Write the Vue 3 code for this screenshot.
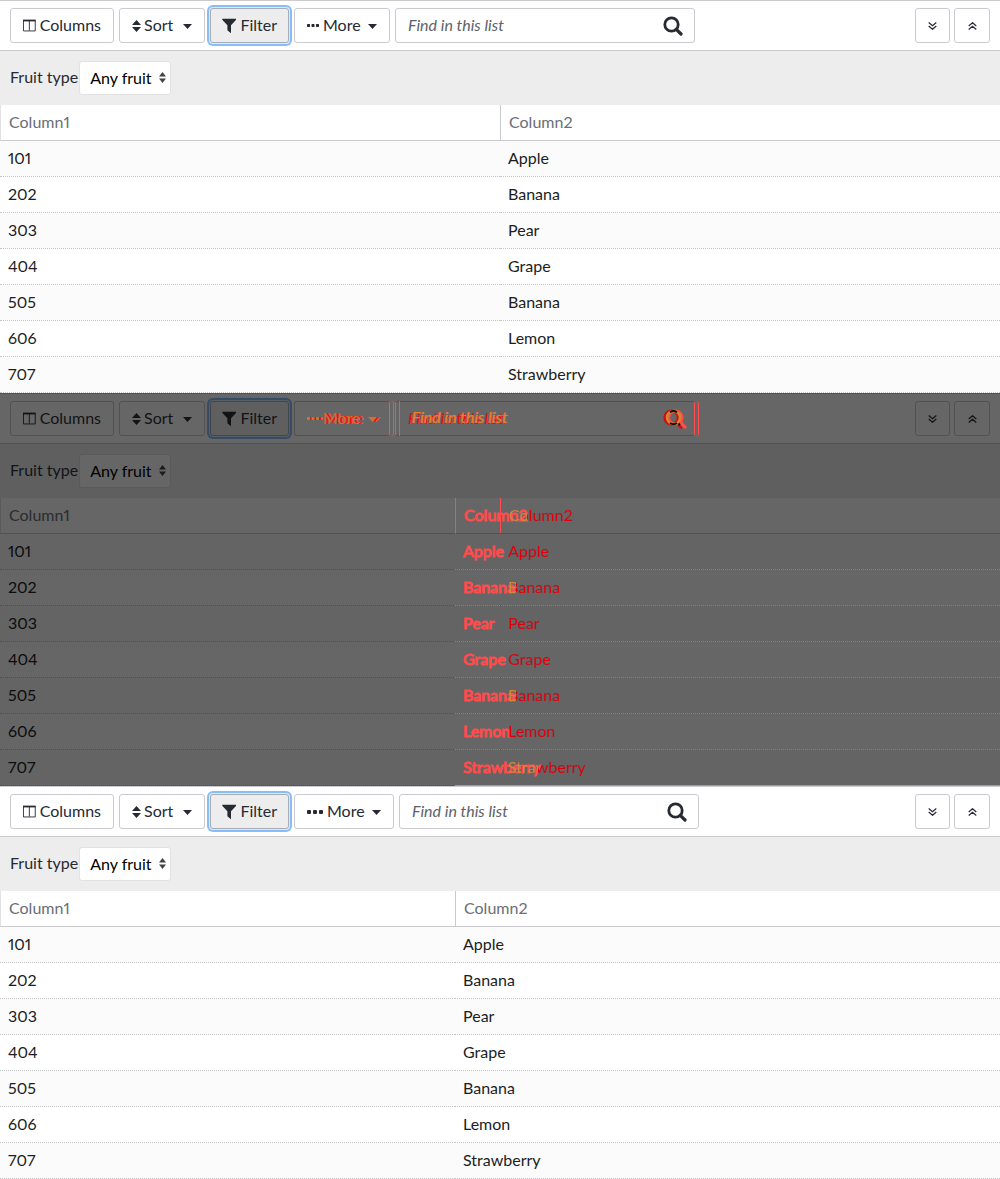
<script setup>
const rows = [
  { id: '101', fruit: 'Apple', mix: 0 },
  { id: '202', fruit: 'Banana', mix: 8 },
  { id: '303', fruit: 'Pear', mix: 0 },
  { id: '404', fruit: 'Grape', mix: 0 },
  { id: '505', fruit: 'Banana', mix: 8 },
  { id: '606', fruit: 'Lemon', mix: 0 },
  { id: '707', fruit: 'Strawberry', mix: 30 },
]
const panels = ['before', 'diff', 'after']
</script>

<template>
  <main class="page">
    <section v-for="p in panels" :key="p" class="panel" :class="p">
      <div class="toolbar">
        <button type="button" class="btn columns">
          <svg width="14" height="13" viewBox="0 0 14 13"><path d="M.5 1v11.500h13V1M7 1v11" fill="none" stroke="currentColor" /><path d="M0 0h14v2H0z" fill="currentColor" /></svg>
          <span>Columns</span>
        </button>
        <button type="button" class="btn sort">
          <svg width="9" height="12" viewBox="0 0 9 12"><path d="M4.500 0L9 5H0zM0 7h9l-4.500 5z" fill="currentColor" /></svg>
          <span>Sort</span>
          <svg class="caret" width="9" height="5" viewBox="0 0 9 5"><path d="M0 0h9L4.500 5z" fill="currentColor" /></svg>
        </button>
        <button type="button" class="btn filter" aria-pressed="true">
          <svg width="16" height="16" viewBox="0 0 16 16"><path d="M.4 0h15.200Q16 .6 15.500 1.200L10 7.200V16L6 12.800V7.200L.5 1.200Q0 .6.4 0z" fill="currentColor" /></svg>
          <span>Filter</span>
        </button>
        <button type="button" class="btn more">
          <svg v-if="p === 'after'" width="16" height="4" viewBox="0 0 16 4"><path d="M0 1q0-1 1-1h2q1 0 1 1v2q0 1-1 1H1q-1 0-1-1zM6 1q0-1 1-1h2q1 0 1 1v2q0 1-1 1H7q-1 0-1-1zM12 1q0-1 1-1h2q1 0 1 1v2q0 1-1 1h-2q-1 0-1-1z" fill="currentColor" /></svg>
          <svg v-else width="12" height="3" viewBox="0 0 12 3"><path d="M.5 0h2l.5.5v2l-.5.5h-2L0 2.500v-2zM5 0h2l.5.5v2L7 3H5l-.5-.5v-2zM9.500 0h2l.5.5v2l-.5.5h-2L9 2.500v-2z" fill="currentColor" /></svg>
          <span>More</span>
          <svg class="caret" width="9" height="5" viewBox="0 0 9 5"><path d="M0 0h9L4.500 5z" fill="currentColor" /></svg>
        </button>
        <div class="search">
          <input type="text" placeholder="Find in this list" aria-label="Find in this list" />
          <svg class="glass" width="20" height="20" viewBox="0 0 20 20"><circle cx="8.500" cy="8.500" r="6.700" fill="none" stroke="currentColor" stroke-width="2.800" /><path d="M13.300 13.300l4.700 4.700" stroke="currentColor" stroke-width="3.200" stroke-linecap="round" /></svg>
          <svg v-if="p === 'diff'" class="glass shifted" width="20" height="20" viewBox="0 0 20 20"><circle cx="8.500" cy="8.500" r="6.700" fill="none" stroke="currentColor" stroke-width="2.800" /><path d="M13.300 13.300l4.700 4.700" stroke="currentColor" stroke-width="3.200" stroke-linecap="round" /></svg>
          <svg v-if="p === 'diff'" class="glass overlap" width="20" height="20" viewBox="0 0 20 20"><circle cx="9.500" cy="8.500" r="6.500" fill="none" stroke="#d8852f" stroke-width="2.500" /><path d="M6 3.200q3.500-2.400 7 0M6 14q3.500 2.400 7 0M14.500 14.500l1.500 1.500" fill="none" stroke="#111" stroke-width="2" /></svg>
          <span v-if="p === 'diff'" class="find-ghost" aria-hidden="true">Find in this list</span>
        </div>
        <div class="actions">
          <button type="button" class="btn square" aria-label="Expand all">
            <svg width="9" height="8" viewBox="0 0 9 8"><path d="M.7.5l3.800 3.300L8.300.5M.7 4l3.800 3.300L8.300 4" fill="none" stroke="currentColor" stroke-width="1.200" /></svg>
          </button>
          <button type="button" class="btn square" aria-label="Collapse all">
            <svg width="9" height="8" viewBox="0 0 9 8"><path d="M.7 4l3.800-3.300L8.300 4M.7 7.500l3.800-3.300 3.800 3.300" fill="none" stroke="currentColor" stroke-width="1.200" /></svg>
          </button>
        </div>
      </div>

      <div class="filters">
        <label :for="'fruit-' + p">Fruit type</label>
        <div class="select">
          <select :id="'fruit-' + p"><option>Any fruit</option></select>
          <svg width="7" height="11" viewBox="0 0 7 11"><path d="M3.500 0L7 4.500H0zM0 6.500h7L3.500 11z" fill="currentColor" /></svg>
        </div>
      </div>

      <div class="grid">
        <table>
          <thead>
            <tr>
              <th class="first">Column1</th>
              <th><span class="value" :style="{ '--mix': '18px' }">Column2</span></th>
            </tr>
          </thead>
          <tbody>
            <tr v-for="r in rows" :key="r.id">
              <td>{{ r.id }}</td>
              <td><span class="value" :style="{ '--mix': r.mix + 'px' }">{{ r.fruit }}</span></td>
            </tr>
          </tbody>
        </table>
        <div v-if="p === 'diff'" class="ghost" aria-hidden="true">
          <div class="ghost-head">Column2</div>
          <div v-for="r in rows" :key="r.id" class="ghost-row">{{ r.fruit }}</div>
        </div>
      </div>
    </section>
  </main>
</template>

<style>
body {
  margin: 0;
}
</style>

<style scoped>
* {
  box-sizing: border-box;
}
.page {
  font: 16px/20px Lato, "Open Sans", sans-serif;
  font-variant-numeric: proportional-nums;
}
.panel {
  --bg: #fff;
  --stripe: #fbfbfb;
  --band: #ededed;
  --line: #cbcbcf;
  --soft: #e2e2e2;
  --dots: #c6c6c6;
  --text: #262a33;
  --strong: #1c1e22;
  --muted: #6a6e75;
  --ring: #86bdfc;
  --halo: #d8eafe;
  background: var(--bg);
  color: var(--text);
}
.diff {
  --bg: #666;
  --stripe: #646464;
  --band: #5f5f5f;
  --line: #515153;
  --soft: #5a5a5a;
  --dots: #4f4f4f;
  --text: #111317;
  --strong: #0b0c0e;
  --muted: #2a2c2f;
  --ring: #364c65;
  --halo: #565e66;
}
.toolbar {
  display: flex;
  align-items: center;
  gap: 5px;
  height: 51px;
  padding: 0 10px;
  border: solid var(--line);
  border-width: 1px 0;
}
.btn {
  display: flex;
  align-items: center;
  flex: none;
  height: 35px;
  margin: 0;
  padding: 0 12px;
  border: 1px solid var(--line);
  border-radius: 3px;
  background: var(--bg);
  color: var(--text);
  font: inherit;
}
.btn span {
  padding-bottom: 2px;
}
.columns {
  gap: 4px;
  width: 104px;
}
.sort {
  gap: 3px;
  width: 86px;
}
.filter {
  gap: 4px;
  width: 79px;
  padding: 0 11px;
  background: var(--band);
  border-color: #a9acb5;
  box-shadow: 0 0 0 1px var(--halo), 0 0 0 3px var(--ring);
}
.diff .filter {
  border-color: #43464b;
}
.more {
  gap: 4px;
  width: 96px;
}
.after .more {
  width: 100px;
}
.caret {
  margin-top: 2px;
  margin-left: auto;
}
.search {
  position: relative;
  flex: 0 1 300px;
  height: 35px;
}
.search input {
  width: 100%;
  height: 100%;
  padding: 0 48px 2px 12px;
  border: 1px solid var(--line);
  border-radius: 3px;
  background: var(--bg);
  color: var(--text);
  font: inherit;
}
.search input::placeholder {
  color: #5e6268;
  font-style: italic;
  opacity: 1;
}
.glass {
  position: absolute;
  top: 8px;
  right: 12px;
}
.actions {
  display: flex;
  gap: 4px;
  margin-left: auto;
}
.square {
  justify-content: center;
  width: 35px;
  padding: 0;
}
.square:last-child {
  width: 36px;
}
.filters {
  display: flex;
  align-items: center;
  gap: 1px;
  height: 54px;
  padding: 0 10px;
  background: var(--band);
}
.filters label {
  padding-bottom: 2px;
}
.select {
  position: relative;
}
.select select {
  appearance: none;
  width: 92px;
  height: 34px;
  padding: 0 10px;
  border: 1px solid var(--soft);
  border-radius: 3px;
  background: var(--bg);
  color: #000;
  font: inherit;
}
.select svg {
  position: absolute;
  top: 11px;
  right: 5px;
  color: #444;
  pointer-events: none;
}
.diff .select svg {
  color: #1b1b1b;
}
.grid {
  position: relative;
}
table {
  width: 100%;
  table-layout: fixed;
  border-collapse: separate;
  border-spacing: 0;
}
th,
td {
  height: 36px;
  padding: 0 8px 2px;
  text-align: left;
}
th {
  border-bottom: 1px solid var(--line);
  border-left: 1px solid var(--line);
  color: var(--muted);
  font-weight: 400;
}
.first {
  width: 50%;
  border-left-color: var(--soft);
}
.after .first {
  width: 45.5%;
}
td {
  border-bottom: 1px dotted var(--dots);
  color: var(--strong);
}
tbody tr:nth-child(odd) {
  background: var(--stripe);
}

/* Changed regions of the comparison panel */
.diff .more {
  position: relative;
  border-right-color: #ff4c4c;
  color: #c8782c;
}
.diff .more span,
.diff .more svg {
  filter: drop-shadow(2px 0 0 #d8141c) drop-shadow(2px 0 0 #ff4c4c);
}
.diff .more::after,
.diff .search::after {
  content: "";
  position: absolute;
  top: -1px;
  right: -5px;
  width: 5px;
  height: 35px;
  border: solid #ff4c4c;
  border-width: 0 1px 0 0;
  border-radius: 0 3px 3px 0;
}
.diff .search::after {
  top: 0;
  right: -4px;
  width: 4px;
}
.diff .search::before {
  content: "";
  position: absolute;
  top: 0;
  left: 4px;
  height: 35px;
  border-left: 1px solid #ff4c4c;
}
.diff .search input {
  border-right-color: #ff4c4c;
  border-left-color: #ff4c4c;
}
.diff .search input::placeholder {
  color: #e01018;
}
.find-ghost {
  position: absolute;
  top: 6px;
  left: 17px;
  color: #d8852f;
  font-style: italic;
  text-shadow: -1px 0 0 #ff4c4c;
}
.diff .glass {
  color: #cc0f14;
}
.diff .glass.shifted {
  right: 8px;
  color: #ff4c4c;
}
.diff .glass.overlap {
  right: 11px;
}
.diff th:last-child {
  border-left-color: #ff4c4c;
}
.diff .value {
  position: relative;
  z-index: 2;
  background: linear-gradient(90deg, #d08a3c var(--mix), #dc000c var(--mix));
  background-clip: text;
  color: transparent;
}
.ghost {
  position: absolute;
  top: 0;
  right: 0;
  bottom: 0;
  left: 45.5%;
  color: #ff4c4c;
  -webkit-text-stroke: 1px #ff4c4c;
}
.ghost-head,
.ghost-row {
  height: 36px;
  padding: 6px 8px;
  line-height: 21px;
}
.ghost-head {
  border-left: 1px solid #ff4c4c;
  border-bottom: 1px solid var(--line);
}
.ghost-row {
  border-bottom: 1px dotted #ff4c4c;
}
.ghost-row:last-child {
  border-bottom: 1px solid #d8914c;
}
</style>
